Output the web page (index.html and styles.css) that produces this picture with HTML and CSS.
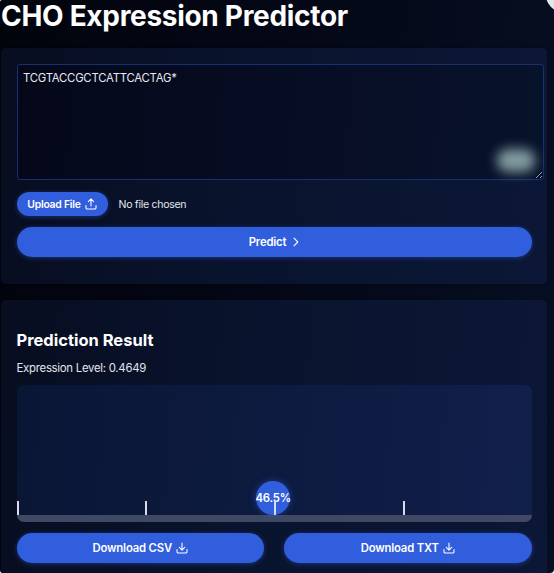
FILE: index.html
```html
<!DOCTYPE html>
<html lang="en">
<head>
    <meta charset="UTF-8">
    <meta name="viewport" content="width=device-width, initial-scale=1.0">
    <title>CHO Expression Predictor</title>
    <link rel="stylesheet" href="styles.css">
</head>
<body>
<div class="app">
    <span class="corner-dot"></span>
    <h1>CHO Expression Predictor</h1>
    <form class="card input-card">
        <div class="sequence">
            <textarea spellcheck="false">TCGTACCGCTCATTCACTAG*</textarea>
            <span class="glow"></span>
        </div>
        <div class="upload-row">
            <button type="button" class="btn upload-btn">
                Upload File
                <svg class="icon" viewBox="0 0 12 12"><path d="M1 7.5v2.2q0 1.3 1.3 1.3h7.4q1.3 0 1.3-1.3V7.5M6 8V1M3.3 3.6 6 .9l2.7 2.7"/></svg>
            </button>
            <span class="file-name">No file chosen</span>
        </div>
        <button type="button" class="btn predict-btn">
            Predict
            <svg class="chevron" viewBox="0 0 6 10"><path d="M1 1.2 4.8 5 1 8.8"/></svg>
        </button>
    </form>
    <section class="card result-card">
        <h2>Prediction Result</h2>
        <p class="level">Expression Level: 0.4649</p>
        <div class="gauge">
            <div class="marker" style="left: 49.85%">46.5%</div>
            <div class="ticks">
                <span></span><span></span><span></span><span></span>
            </div>
            <div class="track"></div>
        </div>
        <div class="downloads">
            <button type="button" class="btn">
                Download CSV
                <svg class="icon" viewBox="0 0 12 12"><path d="M1 7.5v2.2q0 1.3 1.3 1.3h7.4q1.3 0 1.3-1.3V7.5M6 1v7M3.3 5.4 6 8.1l2.7-2.7"/></svg>
            </button>
            <button type="button" class="btn">
                Download TXT
                <svg class="icon" viewBox="0 0 12 12"><path d="M1 7.5v2.2q0 1.3 1.3 1.3h7.4q1.3 0 1.3-1.3V7.5M6 1v7M3.3 5.4 6 8.1l2.7-2.7"/></svg>
            </button>
        </div>
    </section>
</div>
</body>
</html>
```
FILE: styles.css
```css
* {
    box-sizing: border-box;
}
html {
    background: #fff;
}
body {
    margin: 0;
    font-family: Inter, 'Liberation Sans', sans-serif;
    color: #fff;
}
.app {
    position: relative;
    height: 573px;
    padding: 0 7px 0 1px;
    overflow: hidden;
    border-radius: 2px 0 4px 3px;
    background: linear-gradient(100deg, #02040c 0%, #040817 50%, #071024 100%);
}
.corner-dot {
    position: absolute;
    top: -22px;
    right: -26px;
    width: 34px;
    height: 34px;
    border-radius: 50%;
    background: #e4e5e9;
}
h1 {
    margin: 0;
    height: 48px;
    font-size: 28px;
    line-height: 32px;
    font-weight: 700;
    letter-spacing: -0.3px;
    white-space: nowrap;
}
.card {
    padding: 16px 15.5px;
    border-radius: 5px;
    background: linear-gradient(95deg, #080d20 0%, #08132c 40%, #0c1737 100%);
    box-shadow: 0 1px 4px rgba(0, 0, 0, 0.25);
}
.input-card {
    height: 236px;
    margin-bottom: 16px;
}
.sequence {
    position: relative;
    width: 527px;
    height: 116px;
}
textarea {
    display: block;
    width: 100%;
    height: 116px;
    padding: 6px 5.5px;
    border: 1px solid #1a2e72;
    border-radius: 3px;
    outline: none;
    background: linear-gradient(95deg, #040819 0%, #070d24 55%, #07132b 100%);
    color: #e8eaf0;
    font-family: inherit;
    font-size: 11.3px;
    line-height: 15px;
    letter-spacing: -0.2px;
}
.glow {
    position: absolute;
    right: 9px;
    bottom: 8px;
    width: 38px;
    height: 23px;
    border-radius: 11px;
    background: #829a9f;
    filter: blur(6px);
}
.upload-row {
    display: flex;
    align-items: center;
    gap: 11px;
    margin: 12px 0 11px;
}
.btn {
    display: flex;
    align-items: center;
    justify-content: center;
    gap: 4px;
    height: 30px;
    padding: 0;
    border: none;
    border-radius: 15px;
    background: #305edc;
    color: #fff;
    font-family: inherit;
    font-size: 11.3px;
    font-weight: 600;
    letter-spacing: -0.17px;
    box-shadow: 0 1px 5px rgba(48, 94, 220, 0.45);
}
.upload-btn {
    width: 91px;
    height: 24px;
    font-size: 10.4px;
    letter-spacing: -0.25px;
}
.file-name {
    color: #e3e5ec;
    font-size: 10.6px;
    letter-spacing: -0.32px;
}
.predict-btn {
    width: 515px;
    gap: 6px;
}
.predict-btn .chevron {
    margin-left: 1px;
}
.icon {
    width: 12px;
    height: 12px;
}
.icon path,
.chevron path {
    fill: none;
    stroke: #fff;
    stroke-width: 1.1;
    stroke-linecap: round;
    stroke-linejoin: round;
}
.chevron {
    width: 6px;
    height: 10px;
}
.result-card {
    height: 290px;
    padding-top: 30px;
}
h2 {
    margin: 0;
    font-size: 16.5px;
    line-height: 20px;
}
.level {
    margin: 11px 0 9px;
    color: #e3e5ec;
    font-size: 11.4px;
    line-height: 15px;
    letter-spacing: -0.28px;
}
.gauge {
    position: relative;
    display: flex;
    flex-direction: column;
    justify-content: flex-end;
    width: 515px;
    height: 137px;
    border-radius: 7px;
    overflow: hidden;
    background: linear-gradient(95deg, #0a1635 0%, #0d1b40 50%, #111f4b 100%);
}
.marker {
    position: absolute;
    bottom: 7px;
    display: flex;
    align-items: center;
    justify-content: center;
    width: 34px;
    height: 34px;
    margin-left: -17px;
    border-radius: 50%;
    background: #305edc;
    font-size: 11.3px;
    font-weight: 600;
    letter-spacing: -0.2px;
    box-shadow: 0 0 7px rgba(48, 94, 220, 0.5);
}
.ticks {
    position: relative;
    display: grid;
    grid-template-columns: repeat(4, 1fr);
}
.ticks span {
    height: 14px;
    border-left: 2px solid #d9dce5;
}
.track {
    height: 7px;
    background: #3f4963;
}
.downloads {
    display: grid;
    grid-template-columns: 1fr 1fr;
    gap: 20px;
    width: 515px;
    margin-top: 11px;
}
```
